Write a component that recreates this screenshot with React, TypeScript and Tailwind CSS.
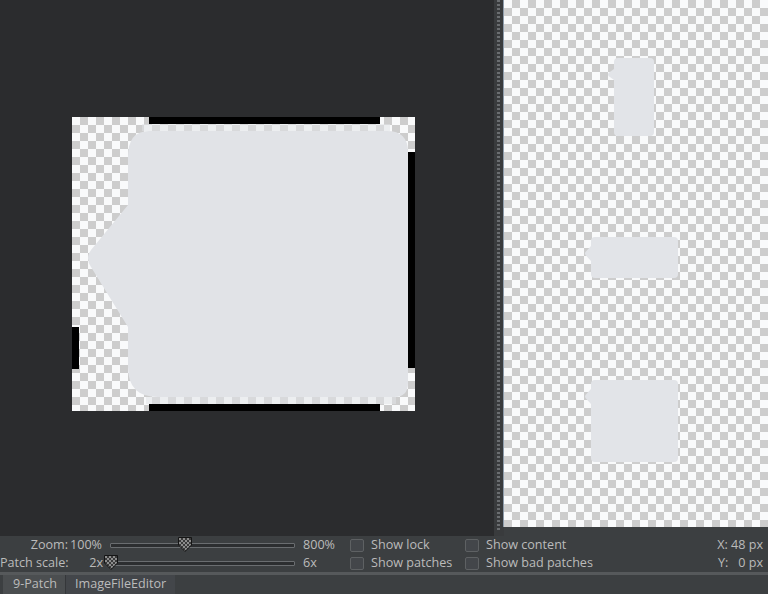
import React from 'react'

const checker =
  'bg-[repeating-conic-gradient(#cdcdcd_0_25%,#f9fafb_0_50%)] bg-[length:16px_16px]'

const Thumb: React.FC<{ id: string }> = ({ id }) => (
  <svg width="16" height="17" viewBox="0 0 16 17">
    <defs>
      <pattern id={id} width="4" height="4" patternUnits="userSpaceOnUse">
        <rect width="4" height="4" fill="#3a3a3a" />
        <rect width="2" height="2" fill="#8c8c8c" />
        <rect x="2" y="2" width="2" height="2" fill="#8c8c8c" />
      </pattern>
    </defs>
    <path d="M1.5 1.5 H14.5 V9 L8 15.5 L1.5 9 Z" fill={`url(#${id})`} stroke="#151515" strokeWidth="1" />
  </svg>
)

const Slider: React.FC<{ thumbLeft: string; id: string }> = ({ thumbLeft, id }) => (
  <div className="relative h-full flex items-center pl-[6px] pr-[5px]">
    <div className="h-[5px] w-full border border-[#6a6d70] bg-[#2c2e30] rounded-[1px]" />
    <div className={`absolute top-[0px] ${thumbLeft}`}>
      <Thumb id={id} />
    </div>
  </div>
)

const Checkbox: React.FC<{ label: string }> = ({ label }) => (
  <div className="flex items-center gap-[7px]">
    <div className="w-[14px] h-[13px] border border-[#5e6163] bg-[#43464a] rounded-[2px]" />
    <span>{label}</span>
  </div>
)

const Preview: React.FC<{ w: number; h: number; bump: number; size: number }> = ({ w, h, bump, size }) => (
  <svg width={w + 7} height={h} viewBox={`0 0 ${w + 7} ${h}`}>
    <path
      d={`M7 ${bump} L1.5 ${bump + size / 2 - 1.5} Q0.5 ${bump + size / 2} 1.5 ${bump + size / 2 + 1.5} L7 ${bump + size} Z`}
      fill="#e2e4e8"
    />
    <rect x="7" y="0" width={w} height={h} rx="4" fill="#e2e4e8" />
  </svg>
)

export default function App() {
  return (
    <div
      className="w-[768px] h-[594px] flex flex-col bg-[#3c3f41] text-[#bbbbbb] text-[12.6px] leading-none overflow-hidden"
      style={{ fontFamily: '"Open Sans", "Noto Sans", sans-serif' }}
    >
      {/* Editor area */}
      <div className="flex h-[536px]">
        {/* Canvas */}
        <div className="w-[494px] bg-[#2b2c2e] pt-[117px] pl-[72px]">
          <div className={`relative w-[343px] h-[294px] ${checker}`}>
            <svg className="absolute inset-0" width="343" height="294" viewBox="0 0 343 294">
              <rect x="77" y="0" width="231" height="7" fill="#000" />
              <rect x="336" y="35" width="7" height="216" fill="#000" />
              <rect x="77" y="287" width="231" height="7" fill="#000" />
              <rect x="0" y="210" width="7" height="42" fill="#000" />
              <rect x="70" y="7" width="248" height="7" fill="#e1e3e7" opacity="0.55" />
              <rect x="74" y="280" width="250" height="7" fill="#e1e3e7" opacity="0.55" />
              <path
                d="M77 14 H315 Q336 14 336 35 V266 Q336 280 322 280 H86 Q56 280 56 250 V210 L19 150 Q13 141 19 133 L56 88 V40 Q56 14 77 14 Z"
                fill="#e1e3e7"
              />
            </svg>
          </div>
        </div>

        {/* Divider */}
        <div className="w-[10px] flex bg-[#393b3d]">
          <div className="w-[3px]" />
          <div className="w-[3px] h-[532px] bg-[repeating-linear-gradient(to_bottom,#6b6e71_0_2px,transparent_2px_4px)]" />
          <div className="w-[3px]" />
          <div className="w-[1px] h-[527px] bg-[#8e9cab]" />
        </div>

        {/* Preview pane */}
        <div className="flex-1 flex flex-col">
          <div className={`h-[527px] flex flex-col items-start pt-[58px] gap-[102px] ${checker}`}>
            <div className="ml-[103px]">
              <Preview w={40} h={78} bump={11} size={11} />
            </div>
            <div className="ml-[80px] -mt-[1px]">
              <Preview w={87} h={41} bump={9} size={15} />
            </div>
            <div className="ml-[80px]">
              <Preview w={87} h={82} bump={9} size={15} />
            </div>
          </div>
        </div>
      </div>

      {/* Controls */}
      <div className="h-[36px] grid grid-cols-[68px_36px_196px_50px_115px_1fr_auto] grid-rows-[18px_18px] items-center">
        <div className="text-right">Zoom:</div>
        <div className="text-right pr-[2px]">100%</div>
        <Slider thumbLeft="left-[73px]" id="t1" />
        <div className="pl-[3px]">800%</div>
        <Checkbox label="Show lock" />
        <Checkbox label="Show content" />
        <div className="text-right pr-[5px] whitespace-pre">X: 48 px</div>

        <div className="whitespace-nowrap">Patch scale:</div>
        <div className="text-right pr-[1px]">2x</div>
        <Slider thumbLeft="-left-[1px]" id="t2" />
        <div className="pl-[3px]">6x</div>
        <Checkbox label="Show patches" />
        <Checkbox label="Show bad patches" />
        <div className="text-right pr-[5px] whitespace-pre">Y:   0 px</div>
      </div>

      {/* Tabs */}
      <div className="flex-1 border-t-[3px] border-[#56595b] bg-[#3c3f41] flex">
        <div className="w-[3px]" />
        <div className="w-[62px] bg-[#4b4e50] flex items-center pl-[10px]">9-Patch</div>
        <div className="w-[110px] bg-[#43464a] border-l border-[#35373a] flex items-center pl-[9px]">
          ImageFileEditor
        </div>
      </div>
    </div>
  )
}
